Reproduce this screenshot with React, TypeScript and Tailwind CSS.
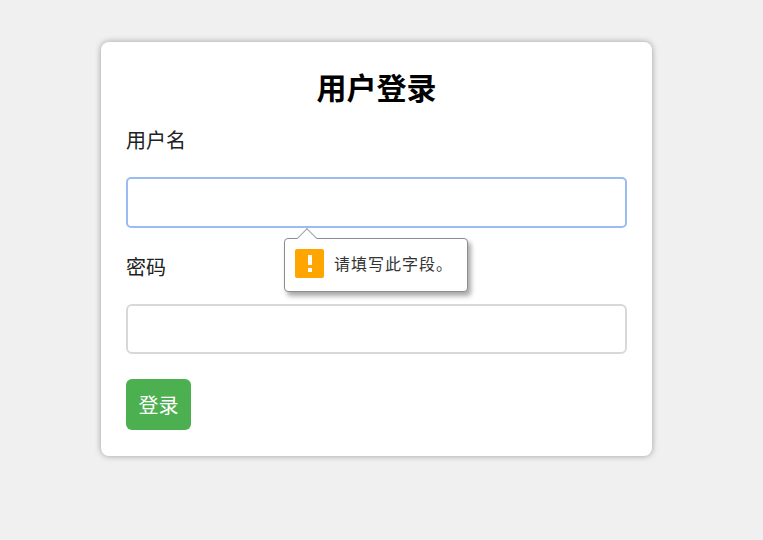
export default function App() {
  return (
    <div className="min-h-screen bg-[#f0f0f0] pt-[42px] pl-[101px] font-['Liberation_Sans','Noto_Sans_CJK_SC',sans-serif]">
      <form className="relative w-[551px] h-[414px] rounded-[8px] bg-white px-[25px] pt-[25px] shadow-[0_0_6px_rgba(0,0,0,0.35)]">
        <h2 className="text-center text-[30px] font-bold leading-[44px] text-black">用户登录</h2>
        <label className="mt-[15px] block text-[20px] leading-[30px] text-[#222]">用户名</label>
        <input className="mt-[21px] block h-[51px] w-full rounded-[5px] border-2 border-[#9abcf2] bg-white outline-none" />
        <label className="mt-[25px] block text-[20px] leading-[30px] text-[#222]">密码</label>
        <input className="mt-[21px] block h-[50px] w-full rounded-[6px] border-2 border-[#d8d8d8] bg-white outline-none" />
        <button type="button" className="mt-[25px] block h-[51px] w-[65px] rounded-[6px] bg-[#4caf50] pt-[2px] text-[20px] text-white">登录</button>

        <div className="absolute left-[183px] top-[196px] flex h-[54px] w-[184px] items-center gap-[10px] rounded-[4px] border border-[#8c8c8c] bg-white pl-[10px] shadow-[3px_4px_5px_rgba(0,0,0,0.35)]">
          <div className="absolute left-[15px] top-[-8px] size-[14px] rotate-45 border-l border-t border-[#a0a0a0] bg-white" />
          <div className="relative mb-[3px] flex size-[29px] shrink-0 flex-col items-center justify-center gap-[3px] rounded-[2px] bg-[#ffa500]">
            <div className="h-[10px] w-[4px] bg-white" />
            <div className="size-[4px] bg-white" />
          </div>
          <span className="relative text-[16px] tracking-[1px] whitespace-nowrap text-[#333]">请填写此字段。</span>
        </div>
      </form>
    </div>
  );
}
